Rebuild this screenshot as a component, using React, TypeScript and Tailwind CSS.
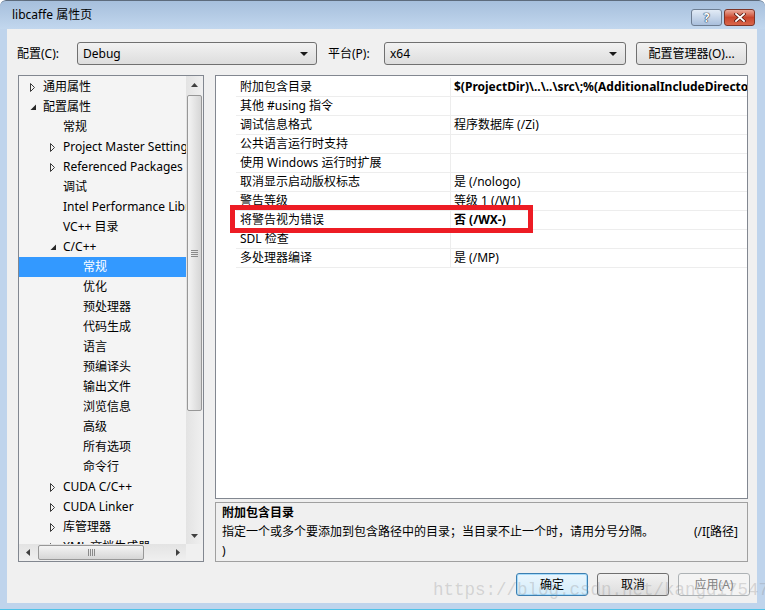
import React from 'react';

type TNode = { l: 0 | 1 | 2; a?: 'c' | 'o'; t: string; sel?: boolean };

const tree: TNode[] = [
  { l: 0, a: 'c', t: '通用属性' },
  { l: 0, a: 'o', t: '配置属性' },
  { l: 1, t: '常规' },
  { l: 1, a: 'c', t: 'Project Master Settings' },
  { l: 1, a: 'c', t: 'Referenced Packages' },
  { l: 1, t: '调试' },
  { l: 1, t: 'Intel Performance Libraries' },
  { l: 1, t: 'VC++ 目录' },
  { l: 1, a: 'o', t: 'C/C++' },
  { l: 2, t: '常规', sel: true },
  { l: 2, t: '优化' },
  { l: 2, t: '预处理器' },
  { l: 2, t: '代码生成' },
  { l: 2, t: '语言' },
  { l: 2, t: '预编译头' },
  { l: 2, t: '输出文件' },
  { l: 2, t: '浏览信息' },
  { l: 2, t: '高级' },
  { l: 2, t: '所有选项' },
  { l: 2, t: '命令行' },
  { l: 1, a: 'c', t: 'CUDA C/C++' },
  { l: 1, a: 'c', t: 'CUDA Linker' },
  { l: 1, a: 'c', t: '库管理器' },
  { l: 1, a: 'c', t: 'XML 文档生成器' },
];

const padCls = ['pl-[11px]', 'pl-[31px]', 'pl-[51px]'];

const props: { n: string; v: string; b?: boolean }[] = [
  { n: '附加包含目录', v: '$(ProjectDir)\\..\\..\\src\\;%(AdditionalIncludeDirectories)', b: true },
  { n: '其他 #using 指令', v: '' },
  { n: '调试信息格式', v: '程序数据库 (/Zi)' },
  { n: '公共语言运行时支持', v: '' },
  { n: '使用 Windows 运行时扩展', v: '' },
  { n: '取消显示启动版权标志', v: '是 (/nologo)' },
  { n: '警告等级', v: '等级 1 (/W1)' },
  { n: '将警告视为错误', v: '否 (/WX-)', b: true },
  { n: 'SDL 检查', v: '' },
  { n: '多处理器编译', v: '是 (/MP)' },
];

function Arrow({ kind }: { kind?: 'c' | 'o' }) {
  if (kind === 'c')
    return (
      <svg width="6" height="9" viewBox="0 0 6 9">
        <path d="M0.5 0.5 L4.5 4.5 L0.5 8.5 Z" fill="none" stroke="#3a3a3a" strokeWidth="1" />
      </svg>
    );
  if (kind === 'o')
    return (
      <svg width="7" height="7" viewBox="0 0 7 7">
        <path d="M6 0.5 L6 6 L0.5 6 Z" fill="#262626" />
      </svg>
    );
  return null;
}

function Combo({ w, text }: { w: string; text: string }) {
  return (
    <div
      className={`${w} h-[23px] rounded-[3px] border border-[#707070] bg-linear-to-b from-[#f2f2f2] to-[#dddddd] flex items-center justify-between pl-[5px] pr-[8px]`}
    >
      <span>{text}</span>
      <svg width="8" height="4" viewBox="0 0 8 4">
        <path d="M0 0 L8 0 L4 4 Z" fill="#1a1a1a" />
      </svg>
    </div>
  );
}

function Btn({ children, kind }: { children: React.ReactNode; kind?: 'def' | 'dis' }) {
  const base = 'w-[72px] h-[23px] rounded-[3px] border flex items-center justify-center';
  if (kind === 'def')
    return (
      <div className={`${base} border-[#3c7fb1] bg-linear-to-b from-[#eaf6fd] to-[#d4ecfa] shadow-[inset_0_0_0_1px_#a7dbfa]`}>
        {children}
      </div>
    );
  if (kind === 'dis')
    return <div className={`${base} border-[#adb2b5] bg-[#f4f4f4] text-[#838383]`}>{children}</div>;
  return <div className={`${base} border-[#707070] bg-linear-to-b from-[#f2f2f2] to-[#dddddd]`}>{children}</div>;
}

function VScroll() {
  return (
    <div className="flex flex-col h-full bg-linear-to-r from-[#e3e3e3] to-[#f0f0f0]">
      <div className="h-[17px] flex items-center justify-center">
        <svg width="7" height="4" viewBox="0 0 7 4">
          <path d="M0 4 L7 4 L3.5 0 Z" fill="#404040" />
        </svg>
      </div>
      <div className="flex-1 relative">
        <div className="absolute left-[1px] right-[1px] top-[2px] h-[316px] rounded-[2px] border border-[#979797] bg-linear-to-r from-[#f4f4f4] to-[#d6d6d6] flex flex-col items-center justify-center gap-[1px]">
          <div className="w-[7px] h-[1px] bg-[#8a8a8a]" />
          <div className="w-[7px] h-[1px] bg-[#8a8a8a]" />
          <div className="w-[7px] h-[1px] bg-[#8a8a8a]" />
          <div className="w-[7px] h-[1px] bg-[#8a8a8a]" />
        </div>
      </div>
      <div className="h-[17px] flex items-center justify-center">
        <svg width="7" height="4" viewBox="0 0 7 4">
          <path d="M0 0 L7 0 L3.5 4 Z" fill="#404040" />
        </svg>
      </div>
    </div>
  );
}

function HScroll() {
  return (
    <div className="flex w-full h-full bg-linear-to-b from-[#e3e3e3] to-[#f0f0f0]">
      <div className="w-[17px] flex items-center justify-center">
        <svg width="4" height="7" viewBox="0 0 4 7">
          <path d="M4 0 L4 7 L0 3.5 Z" fill="#404040" />
        </svg>
      </div>
      <div className="flex-1 relative">
        <div className="absolute top-[1px] bottom-[1px] left-[2px] w-[106px] rounded-[2px] border border-[#979797] bg-linear-to-b from-[#f4f4f4] to-[#d6d6d6] flex items-center justify-center gap-[1px]">
          <div className="w-[1px] h-[7px] bg-[#8a8a8a]" />
          <div className="w-[1px] h-[7px] bg-[#8a8a8a]" />
          <div className="w-[1px] h-[7px] bg-[#8a8a8a]" />
          <div className="w-[1px] h-[7px] bg-[#8a8a8a]" />
        </div>
      </div>
      <div className="w-[17px] flex items-center justify-center">
        <svg width="4" height="7" viewBox="0 0 4 7">
          <path d="M0 0 L0 7 L4 3.5 Z" fill="#404040" />
        </svg>
      </div>
    </div>
  );
}

export default function App() {
  return (
    <div className="w-[765px] h-[610px] relative overflow-hidden bg-[#bfd4ec] border-b border-[#4fc3e8] flex flex-col font-['Noto_Sans','Noto_Sans_CJK_SC',sans-serif] text-[12px] text-black rounded-t-[6px]">
      {/* title bar */}
      <div className="h-[29px] shrink-0 bg-linear-to-b from-[#a6bfdc] to-[#c2d7ee] flex items-center pl-[12px] pr-[10px] border-t border-[#5d6b7c] rounded-t-[6px]">
        <span className="text-[12px] leading-none">libcaffe 属性页</span>
        <div className="flex-1" />
        <div className="flex gap-[2px] self-start mt-[8px]">
          <div className="w-[31px] h-[17px] rounded-[3px] border border-[#6d7d92] bg-linear-to-b from-[#e2ebf6] to-[#a9bfdc] flex items-center justify-center text-[12px] font-bold leading-none text-white [text-shadow:0_0_1px_#1e2f45,0_0_1px_#1e2f45,0_0_1px_#1e2f45]">
            ?
          </div>
          <div className="w-[31px] h-[17px] rounded-[3px] border border-[#7e3527] bg-linear-to-b from-[#e9a99a] via-[#c9452c] to-[#d9664a] flex items-center justify-center">
            <svg width="12" height="9" viewBox="0 0 12 9">
              <path d="M2 1 L10 8 M10 1 L2 8" stroke="#5a1a10" strokeWidth="3.4" strokeLinecap="square" />
              <path d="M2 1 L10 8 M10 1 L2 8" stroke="#ffffff" strokeWidth="1.8" strokeLinecap="square" />
            </svg>
          </div>
        </div>
      </div>

      {/* content */}
      <div className="ml-[7px] mr-[8px] h-[574px] shrink-0 bg-[#f0f0f0] flex flex-col">
        {/* top row */}
        <div className="h-[36px] pt-[13px] pl-[10px] flex items-center">
          <div className="w-[60px]">配置(C):</div>
          <Combo w="w-[240px]" text="Debug" />
          <div className="ml-[11px] w-[56px]">平台(P):</div>
          <Combo w="w-[242px]" text="x64" />
          <div className="ml-[10px] w-[111px] h-[23px] rounded-[3px] border border-[#707070] bg-linear-to-b from-[#f2f2f2] to-[#dddddd] flex items-center justify-center">
            配置管理器(O)...
          </div>
        </div>

        {/* main */}
        <div className="mt-[10px] pl-[11px] h-[487px] flex">
          {/* tree */}
          <div className="w-[186px] h-[487px] border border-[#828790] bg-[#f4f4f4] grid grid-cols-[1fr_17px] grid-rows-[1fr_17px]">
            <div className="overflow-hidden pt-[1px]">
              {tree.map((n, i) => (
                <div
                  key={i}
                  className={`h-[20px] flex items-center whitespace-nowrap ${padCls[n.l]} ${n.sel ? 'bg-[#3399ff] text-white' : ''}`}
                >
                  <span className="w-[13px] shrink-0 flex items-center">
                    <Arrow kind={n.a} />
                  </span>
                  <span className="leading-[20px]">{n.t}</span>
                </div>
              ))}
            </div>
            <VScroll />
            <HScroll />
            <div className="bg-[#f0f0f0]" />
          </div>

          {/* right */}
          <div className="ml-[11px] w-[533px] flex flex-col gap-[3px]">
            <div className="h-[424px] border border-[#828790] bg-white pt-[2px]">
              {props.map((p, i) => (
                <div key={i} className="h-[19px] flex">
                  <div className="w-[20px] shrink-0" />
                  <div className="w-[215px] shrink-0 border-b border-r border-[#ededed] pl-[4px] leading-[18px] whitespace-nowrap overflow-hidden">
                    {p.n}
                  </div>
                  <div
                    className={`flex-1 min-w-0 border-b border-[#ededed] pl-[3px] leading-[18px] whitespace-nowrap overflow-hidden ${p.b ? 'font-bold' : ''}`}
                  >
                    {p.v}
                  </div>
                </div>
              ))}
            </div>
            <div className="h-[60px] border border-[#a0a0a0] bg-[#f0f0f0] px-[6px] leading-[19px]">
              <div className="font-bold">附加包含目录</div>
              <div className="flex justify-between pr-[3px] whitespace-nowrap">
                <span>指定一个或多个要添加到包含路径中的目录；当目录不止一个时，请用分号分隔。</span>
                <span>(/I[路径]</span>
              </div>
              <div>)</div>
            </div>
          </div>
        </div>

        {/* buttons */}
        <div className="mt-[11px] pr-[7px] flex justify-end gap-[9px]">
          <Btn kind="def">确定</Btn>
          <Btn>取消</Btn>
          <Btn kind="dis">应用(A)</Btn>
        </div>
      </div>

      {/* red highlight */}
      <div className="absolute left-[230px] top-[205px] w-[303px] h-[28px] border-[5px] border-[#ed1c24] pointer-events-none" />

      {/* watermark */}
      <div className="absolute left-[433px] top-[580px] text-[17.5px] leading-[20px] font-['Liberation_Mono',monospace] text-[rgba(140,140,140,0.3)] whitespace-nowrap pointer-events-none">
        https://blog.csdn.net/kangdi7547
      </div>
    </div>
  );
}
